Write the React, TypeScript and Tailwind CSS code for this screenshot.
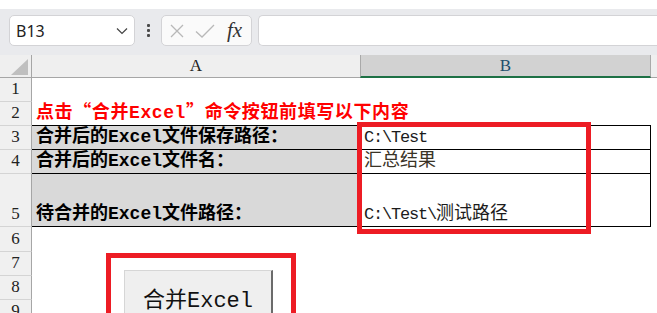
import React from "react";

const cellFont = "font-['Liberation_Mono','Noto_Sans_CJK_SC',monospace]";
const cjk = "font-['Noto_Sans_CJK_SC',sans-serif]";

type Row = {
  n: string;
  h: string;
  a?: React.ReactNode;
  b?: React.ReactNode;
  aFill?: boolean;
  boxed?: boolean;
  lineBelow?: boolean;
};

const rows: Row[] = [
  { n: "1", h: "h-[24px]" },
  {
    n: "2",
    h: "h-[24px]",
    lineBelow: true,
    a: (
      <span className="text-[#ff0000] font-bold tracking-[0.6px]">
        点击<span className={cjk}>“</span>合并Excel<span className={cjk}>”</span>命令按钮前填写以下内容
      </span>
    ),
  },
  {
    n: "3",
    h: "h-[24px]",
    aFill: true,
    boxed: true,
    lineBelow: true,
    a: <span className="font-bold">合并后的Excel文件保存路径：</span>,
    b: <span className="text-[17px] tracking-[-1.2px]">C:\Test</span>,
  },
  {
    n: "4",
    h: "h-[24px]",
    aFill: true,
    boxed: true,
    lineBelow: true,
    a: <span className="font-bold">合并后的Excel文件名：</span>,
    b: <span className="text-[#3a3326]">汇总结果</span>,
  },
  {
    n: "5",
    h: "h-[53px]",
    aFill: true,
    boxed: true,
    lineBelow: true,
    a: <span className="font-bold">待合并的Excel文件路径：</span>,
    b: (
      <span>
        <span className="text-[17px] tracking-[-1.2px]">C:\Test\</span>测试路径
      </span>
    ),
  },
  { n: "6", h: "h-[25px]" },
  { n: "7", h: "h-[24px]" },
  { n: "8", h: "h-[24px]" },
  { n: "9", h: "h-[24px]" },
];

function FormulaBar() {
  return (
    <div className="h-[55px] flex flex-col">
      <div className="h-[9px] bg-white" />
      <div className="h-[46px] bg-[#e9eaed] flex items-start pt-[6px] pl-[9px]">
        <div className="w-[126px] h-[31px] bg-white border border-[#d3d3d6] rounded-[5px] flex items-center justify-between pl-[6px] pr-[6px]">
          <span className="font-['Noto_Sans','Open_Sans',sans-serif] text-[16px] text-[#222]">B13</span>
          <svg width="12" height="8" viewBox="0 0 12 8">
            <path d="M1 1.5 L6 6.5 L11 1.5" fill="none" stroke="#444" strokeWidth="1.2" />
          </svg>
        </div>
        <div className="w-[26px] h-[31px] flex flex-col items-center justify-center gap-[2px]">
          <div className="w-[3px] h-[3px] bg-[#4a4a4a] rounded-[1px]" />
          <div className="w-[3px] h-[3px] bg-[#4a4a4a] rounded-[1px]" />
          <div className="w-[3px] h-[3px] bg-[#4a4a4a] rounded-[1px]" />
        </div>
        <div className="w-[91px] h-[31px] bg-[#fafafa] border border-[#d3d3d6] rounded-[5px] flex items-center pl-[7px] gap-[10px]">
          <svg width="16" height="16" viewBox="0 0 16 16">
            <path d="M2 2 L14 14 M14 2 L2 14" stroke="#b8b8b8" strokeWidth="1.3" />
          </svg>
          <svg width="20" height="16" viewBox="0 0 20 16">
            <path d="M1 8.5 L7 14 L19 2" fill="none" stroke="#b8b8b8" strokeWidth="1.3" />
          </svg>
          <span className="font-['Liberation_Serif',serif] italic text-[21px] leading-none text-[#333] ml-[2px]">fx</span>
        </div>
        <div className="ml-[6px] flex-1 h-[31px] bg-white border border-[#d3d3d6] rounded-l-[5px] border-r-0" />
      </div>
    </div>
  );
}

function ColumnHeader() {
  return (
    <div className="h-[23px] flex bg-[#efefef] font-['Liberation_Serif',serif] text-[17px] text-[#222]">
      <div className="w-[32px] border-r border-b border-[#a6a6a6] flex items-end justify-end pr-[3px] pb-[2px]">
        <svg width="17" height="16" viewBox="0 0 17 16">
          <path d="M0 16 L17 16 L17 0 Z" fill="#bfbfbf" />
        </svg>
      </div>
      <div className="w-[328px] border-b border-[#a6a6a6] flex items-center justify-center">A</div>
      <div className="w-[291px] bg-[#d2d2d2] border-l border-r border-[#a9a9a9] border-b-2 border-b-[#1e7145] flex items-center justify-center text-[#1d4f6d]">
        B
      </div>
      <div className="flex-1 border-b border-[#a6a6a6]" />
    </div>
  );
}

function SheetRow({ row }: { row: Row }) {
  return (
    <div className={`flex ${row.h}`}>
      <div className="w-[32px] shrink-0 bg-[#f0f0f0] border-r border-r-[#a6a6a6] border-b border-b-[#d4d4d4] flex items-end justify-center pb-[2px] font-['Liberation_Serif',serif] text-[17px] leading-[20px] text-[#222]">
        {row.n}
      </div>
      <div
        className={`w-[328px] shrink-0 flex items-end pl-[4px] pb-[1px] whitespace-nowrap overflow-visible z-10 text-[18px] leading-[21px] text-black ${cellFont} ${
          row.aFill ? "bg-[#d9d9d9]" : ""
        } ${row.lineBelow ? "border-b border-b-black" : ""}`}
      >
        {row.a}
      </div>
      <div
        className={`w-[291px] shrink-0 flex items-end pl-[3px] pb-[1px] whitespace-nowrap text-[18px] leading-[21px] text-[#1c1c1c] ${cellFont} ${
          row.boxed ? "border-l border-r border-black" : ""
        } ${row.lineBelow ? "border-b border-b-black" : ""}`}
      >
        {row.b}
      </div>
      <div className="flex-1" />
    </div>
  );
}

export default function App() {
  return (
    <div className="w-[657px] h-[313px] overflow-hidden relative bg-white">
      <FormulaBar />
      <ColumnHeader />
      <div className="flex flex-col">
        {rows.map((r) => (
          <SheetRow key={r.n} row={r} />
        ))}
      </div>

      {/* red highlight around the inputs */}
      <div className="absolute left-[357px] top-[122px] w-[234px] h-[112px] border-[5px] border-[#ed1c24] z-20" />

      {/* form button */}
      <div className="absolute left-[124px] top-[270px] w-[149px] h-[62px] bg-[#efefef] border border-[#d6d6d6] border-r-2 border-r-[#6b6b6b] flex items-center justify-center z-20">
        <span className={`text-[22px] text-[#111] ${cellFont}`}>合并Excel</span>
      </div>

      {/* red highlight around the button */}
      <div className="absolute left-[106px] top-[253px] w-[190px] h-[90px] border-[5px] border-[#ed1c24] z-30" />
    </div>
  );
}
